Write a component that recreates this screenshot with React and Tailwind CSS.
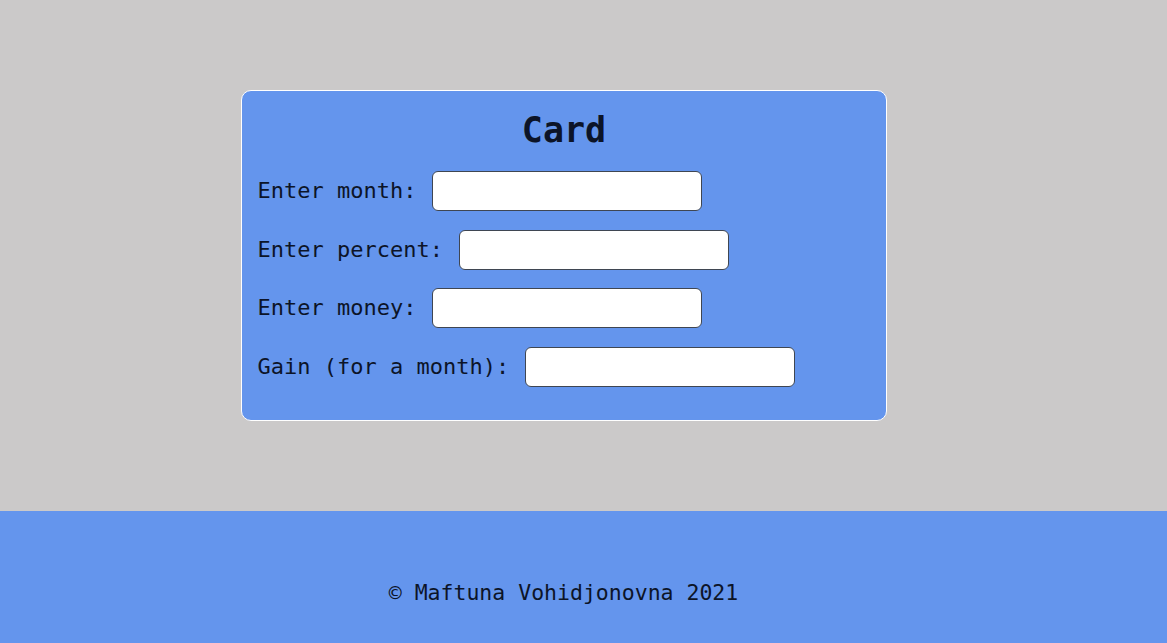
export default function App() {
    const rows = ['Enter month:', 'Enter percent:', 'Enter money:', 'Gain (for a month):'];

    return (
        <div className="min-h-[643px] flex flex-col bg-[#cbc9c9] text-[#0c1428] font-['DejaVu_Sans_Mono','Liberation_Mono',monospace]">
            {/* Main */}
            <div className="h-[511px] pr-[40px] pt-[90px]">
                <div className="mx-auto w-[646px] h-[331px] bg-[#6495ed] border border-white rounded-[10px] pl-[16px] pr-[15px] pt-[15px]">
                    <h1 className="h-[49px] leading-[48px] text-center text-[35px] font-bold">Card</h1>
                    <div className="mt-[16px] flex flex-col gap-[18.7px]">
                        {rows.map((label) => (
                            <div key={label} className="flex items-center gap-[16px] h-[40px]">
                                <label className="text-[22px] leading-none">{label}</label>
                                <input
                                    type="text"
                                    className="w-[270px] h-[40px] bg-white border border-[#3f4652] rounded-[6px] outline-none px-2"
                                />
                            </div>
                        ))}
                    </div>
                </div>
            </div>

            {/* Footer */}
            <footer className="h-[132px] bg-[#6495ed] pr-[40px] pt-[71px]">
                <p className="text-center text-[21.5px] leading-none">© Maftuna Vohidjonovna 2021</p>
            </footer>
        </div>
    );
}
